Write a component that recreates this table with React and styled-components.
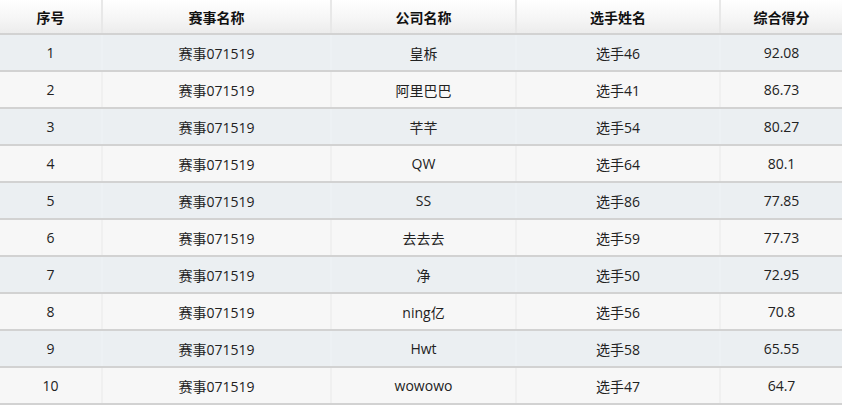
import React from 'react';
import styled, { createGlobalStyle } from 'styled-components';

const GlobalStyle = createGlobalStyle`
  html, body {
    margin: 0;
    padding: 0;
    background: #fff;
  }
  body {
    font-family: "Open Sans", "Noto Sans CJK SC", sans-serif;
    color: #222;
  }
`;

const Table = styled.table`
  width: 842px;
  border-collapse: collapse;
  table-layout: fixed;
  font-size: 14px;
`;

const HeadCell = styled.th`
  height: 33px;
  padding: 0;
  font-weight: 700;
  text-align: center;
  color: #111;
  background: linear-gradient(to bottom, #ffffff 0%, #f6f6f6 55%, #ececec 100%);
  border-bottom: 2px solid #d2d2d2;
  border-right: 2px solid #e8e8e8;

  &:last-child {
    border-right: none;
  }
`;

const Row = styled.tr`
  background: ${(p) => (p.$odd ? '#ebeff2' : '#f7f7f7')};
`;

const Cell = styled.td`
  height: 35px;
  padding: 0;
  text-align: center;
  border-bottom: 2px solid #d2d2d2;
  border-right: 2px solid ${(p) => (p.$odd ? '#edf1f4' : '#f0f0f0')};

  &:last-child {
    border-right: none;
  }
`;

const columns = [
  { title: '序号', width: 102 },
  { title: '赛事名称', width: 229 },
  { title: '公司名称', width: 185 },
  { title: '选手姓名', width: 204 },
  { title: '综合得分', width: 122 },
];

const rows = [
  ['皇柝', '选手46', '92.08'],
  ['阿里巴巴', '选手41', '86.73'],
  ['芊芊', '选手54', '80.27'],
  ['QW', '选手64', '80.1'],
  ['SS', '选手86', '77.85'],
  ['去去去', '选手59', '77.73'],
  ['净', '选手50', '72.95'],
  ['ning亿', '选手56', '70.8'],
  ['Hwt', '选手58', '65.55'],
  ['wowowo', '选手47', '64.7'],
];

const App = () => {
  return (
    <>
      <GlobalStyle />
      <Table>
        <colgroup>
          {columns.map((c) => (
            <col key={c.title} style={{ width: c.width }} />
          ))}
        </colgroup>
        <thead>
          <tr>
            {columns.map((c) => (
              <HeadCell key={c.title}>{c.title}</HeadCell>
            ))}
          </tr>
        </thead>
        <tbody>
          {rows.map((r, i) => {
            const odd = i % 2 === 0;
            return (
              <Row key={i} $odd={odd}>
                <Cell $odd={odd}>{i + 1}</Cell>
                <Cell $odd={odd}>赛事071519</Cell>
                <Cell $odd={odd}>{r[0]}</Cell>
                <Cell $odd={odd}>{r[1]}</Cell>
                <Cell $odd={odd}>{r[2]}</Cell>
              </Row>
            );
          })}
        </tbody>
      </Table>
    </>
  );
};

export default App;
